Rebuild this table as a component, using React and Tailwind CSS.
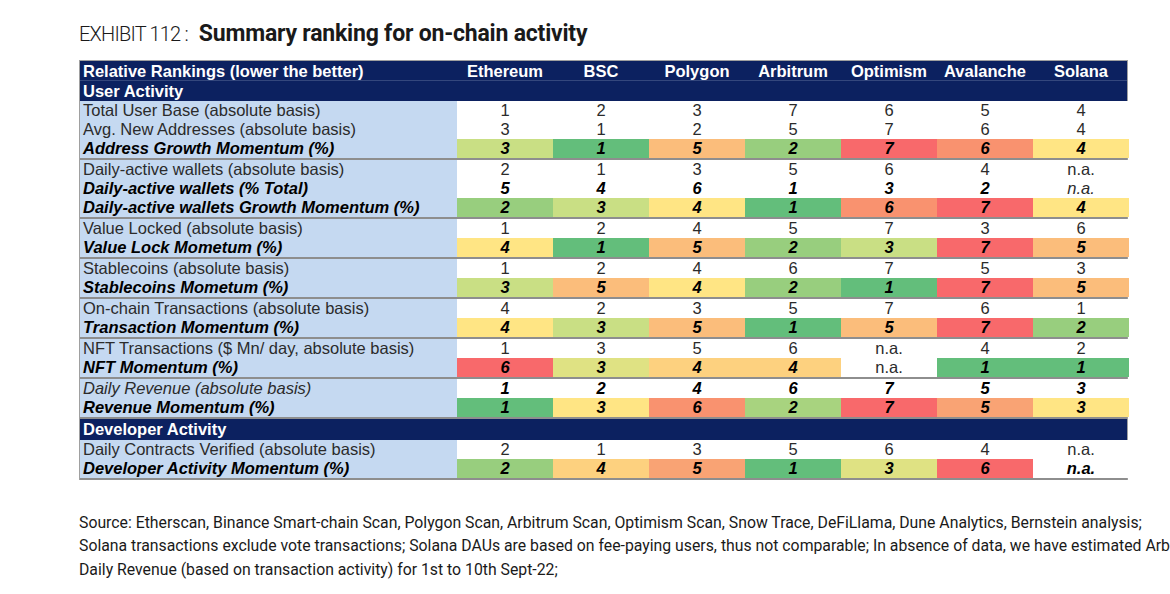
import React from "react";

const BG = {
  g1: "bg-[#63be7b]",
  g2: "bg-[#98ce7e]",
  g2b: "bg-[#a8d37f]",
  g3: "bg-[#c9df84]",
  g3b: "bg-[#dfe283]",
  y4: "bg-[#ffe584]",
  o4: "bg-[#fdd17f]",
  o5: "bg-[#fbbd7b]",
  o5b: "bg-[#f9a374]",
  o6: "bg-[#f9926f]",
  r7: "bg-[#f8696b]",
  w: "bg-white",
};

const COLS = ["Ethereum", "BSC", "Polygon", "Arbitrum", "Optimism", "Avalanche", "Solana"];

const groups = [
  [
    { label: "Total User Base (absolute basis)", ls: "n", v: ["1", "2", "3", "7", "6", "5", "4"], vs: "n" },
    { label: "Avg. New Addresses (absolute basis)", ls: "n", v: ["3", "1", "2", "5", "7", "6", "4"], vs: "n" },
    { label: "Address Growth Momentum (%)", ls: "bi", v: ["3", "1", "5", "2", "7", "6", "4"], vs: "bi", c: ["g3", "g1", "o5", "g2", "r7", "o6", "y4"] },
  ],
  [
    { label: "Daily-active wallets (absolute basis)", ls: "n", v: ["2", "1", "3", "5", "6", "4", "n.a."], vs: "n" },
    { label: "Daily-active wallets (% Total)", ls: "bi", v: ["5", "4", "6", "1", "3", "2", "n.a."], vs: ["bi", "bi", "bi", "bi", "bi", "bi", "i"] },
    { label: "Daily-active wallets Growth Momentum (%)", ls: "bi", v: ["2", "3", "4", "1", "6", "7", "4"], vs: "bi", c: ["g2", "g3", "y4", "g1", "o6", "r7", "y4"] },
  ],
  [
    { label: "Value Locked (absolute basis)", ls: "n", v: ["1", "2", "4", "5", "7", "3", "6"], vs: "n" },
    { label: "Value Lock Mometum (%)", ls: "bi", v: ["4", "1", "5", "2", "3", "7", "5"], vs: "bi", c: ["y4", "g1", "o5", "g2", "g3", "r7", "o5"] },
  ],
  [
    { label: "Stablecoins (absolute basis)", ls: "n", v: ["1", "2", "4", "6", "7", "5", "3"], vs: "n" },
    { label: "Stablecoins Mometum (%)", ls: "bi", v: ["3", "5", "4", "2", "1", "7", "5"], vs: "bi", c: ["g3", "o5", "y4", "g2", "g1", "r7", "o5"] },
  ],
  [
    { label: "On-chain Transactions (absolute basis)", ls: "n", v: ["4", "2", "3", "5", "7", "6", "1"], vs: "n" },
    { label: "Transaction Momentum (%)", ls: "bi", v: ["4", "3", "5", "1", "5", "7", "2"], vs: "bi", c: ["y4", "g3", "o5", "g1", "o5", "r7", "g2"] },
  ],
  [
    { label: "NFT Transactions ($ Mn/ day, absolute basis)", ls: "n", v: ["1", "3", "5", "6", "n.a.", "4", "2"], vs: "n" },
    { label: "NFT Momentum (%)", ls: "bi", v: ["6", "3", "4", "4", "n.a.", "1", "1"], vs: ["bi", "bi", "bi", "bi", "n", "bi", "bi"], c: ["r7", "g3b", "o4", "o4", "w", "g1", "g1"] },
  ],
  [
    { label: "Daily Revenue (absolute basis)", ls: "i", v: ["1", "2", "4", "6", "7", "5", "3"], vs: "bi" },
    { label: "Revenue Momentum (%)", ls: "bi", v: ["1", "3", "6", "2", "7", "5", "3"], vs: "bi", c: ["g1", "y4", "o6", "g2b", "r7", "o5b", "y4"] },
  ],
];

const devGroup = [
  { label: "Daily Contracts Verified (absolute basis)", ls: "n", v: ["2", "1", "3", "5", "6", "4", "n.a."], vs: "n" },
  { label: "Developer Activity Momentum (%)", ls: "bi", v: ["2", "4", "5", "1", "3", "6", "n.a."], vs: "bi", c: ["g2", "o4", "o5b", "g1", "g3b", "r7", "w"] },
];

const TXT = {
  n: "font-normal not-italic text-[#2b2b2b]",
  bi: "font-bold italic text-black",
  i: "font-normal italic text-[#2b2b2b]",
};

function Row({ r }) {
  return (
    <div className="flex h-[19px] leading-[19px]">
      <div className={`w-[377px] shrink-0 pl-[3px] bg-[#c5d9f1] whitespace-nowrap ${TXT[r.ls]}`}>{r.label}</div>
      {r.v.map((val, i) => {
        const bg = r.c ? BG[r.c[i]] : "bg-white";
        const st = Array.isArray(r.vs) ? r.vs[i] : r.vs;
        return (
          <div key={i} className={`w-[96px] shrink-0 text-center ${bg} ${TXT[st]}`}>
            {val}
          </div>
        );
      })}
    </div>
  );
}

function Group({ rows }) {
  return (
    <div className="border-b-2 border-[#8e8e8e]">
      {rows.map((r, i) => (
        <Row key={i} r={r} />
      ))}
    </div>
  );
}

export default function App() {
  return (
    <div className="w-[1170px] h-[594px] overflow-hidden bg-white relative">
      <div className="pl-[79px] pt-[17px] flex items-baseline text-[#1a1a1a]" style={{ fontFamily: "Roboto, 'Liberation Sans', sans-serif" }}>
        <span className="text-[20px] font-light tracking-[-0.8px]">EXHIBIT 112 :</span>
        <span className="text-[23px] font-bold ml-[11px] tracking-[-0.2px]">Summary ranking for on-chain activity</span>
      </div>

      <div
        className="ml-[79px] mt-[8px] w-[1049px] border-t border-l border-r border-[#a0a0a0] text-[16.5px]"
        style={{ fontFamily: "'Liberation Sans', Arial, sans-serif" }}
      >
        <div className="flex h-[20px] leading-[20px] bg-[#0c2160] text-white font-bold border-b border-[#34477d]">
          <div className="w-[377px] shrink-0 pl-[3px] whitespace-nowrap">Relative Rankings (lower the better)</div>
          {COLS.map((c) => (
            <div key={c} className="w-[96px] shrink-0 text-center">
              {c}
            </div>
          ))}
        </div>
        <div className="h-[20px] leading-[20px] bg-[#0c2160] text-white font-bold pl-[3px]">User Activity</div>
        {groups.map((g, i) => (
          <Group key={i} rows={g} />
        ))}
        <div className="h-[21px] leading-[21px] bg-[#0c2160] text-white font-bold pl-[3px]">Developer Activity</div>
        <Group rows={devGroup} />
      </div>

      <div
        className="ml-[79px] mt-[31px] text-[15.8px] leading-[23.5px] text-[#1a1a1a] whitespace-nowrap"
        style={{ fontFamily: "Roboto, 'Liberation Sans', sans-serif" }}
      >
        <div>Source: Etherscan, Binance Smart-chain Scan, Polygon Scan, Arbitrum Scan, Optimism Scan, Snow Trace, DeFiLlama, Dune Analytics, Bernstein analysis;</div>
        <div>Solana transactions exclude vote transactions; Solana DAUs are based on fee-paying users, thus not comparable; In absence of data, we have estimated Arbitrum</div>
        <div>Daily Revenue (based on transaction activity) for 1st to 10th Sept-22;</div>
      </div>
    </div>
  );
}
